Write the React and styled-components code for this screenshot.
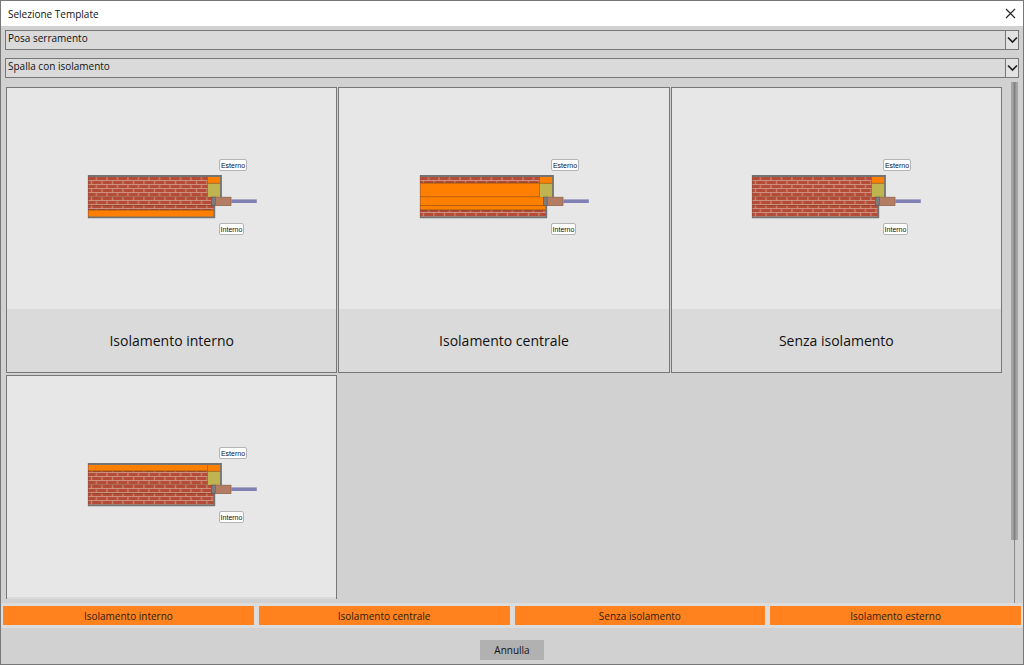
import { useState } from 'react';
import styled, { createGlobalStyle } from 'styled-components';

const GlobalStyle = createGlobalStyle`
  * {
    box-sizing: border-box;
  }

  body {
    margin: 0;
    font-family: 'Open Sans', 'Noto Sans', sans-serif;
    font-size: 10px;
    line-height: 14px;
    color: #111111;
  }

  button,
  select {
    font: inherit;
    color: inherit;
  }
`;

const Window = styled.main`
  height: 100vh;
  display: flex;
  flex-direction: column;
  border: 1px solid #777777;
  background-color: #d1d1d1;
`;

const TitleBar = styled.header`
  display: flex;
  align-items: center;
  justify-content: space-between;
  flex-shrink: 0;
  height: 25px;
  padding: 0 7px;
  background-color: #ffffff;
`;

const Title = styled.h1`
  margin: 0;
  font-size: 10px;
  font-weight: 400;
`;

const CloseButton = styled.button`
  display: flex;
  padding: 0;
  border: none;
  background: none;
`;

const Filters = styled.div`
  display: flex;
  flex-direction: column;
  flex-shrink: 0;
  gap: 8px;
  padding: 4px 4px 9px;
`;

const Combo = styled.label`
  display: grid;
  grid-template-columns: 1fr 14px;
  grid-template-rows: 20px;
`;

const ComboSelect = styled.select`
  grid-area: 1 / 1 / 2 / 3;
  appearance: none;
  padding: 0 20px 4px 2px;
  border: 1px solid #777777;
  border-radius: 0;
  background-color: #dadada;
`;

const ComboArrow = styled.span`
  grid-area: 1 / 2 / 2 / 3;
  display: flex;
  align-items: center;
  justify-content: center;
  border: 1px solid #777777;
  background-color: #e2e2e2;
  pointer-events: none;
`;

const Body = styled.div`
  display: flex;
  flex: 1;
  min-height: 0;
  padding: 0 5px;
`;

const Cards = styled.div`
  flex: 1;
  display: grid;
  grid-template-columns: repeat(3, 1fr);
  align-content: start;
  gap: 2px 1px;
  margin-bottom: 4px;
  overflow-y: auto;
  scrollbar-width: none;
`;

const Card = styled.button`
  display: flex;
  flex-direction: column;
  padding: 0;
  border: 1px solid #777777;
  background-color: #e7e7e7;
`;

const Preview = styled.span`
  display: flex;
  align-items: center;
  justify-content: center;
  width: 100%;
  height: 221px;
`;

const Caption = styled.span`
  width: 100%;
  padding: 20px 0;
  background-color: #dadada;
  font-size: 14px;
  line-height: 23px;
  text-align: center;
`;

const ScrollRail = styled.div`
  flex-shrink: 0;
  width: 7px;
  margin-left: 9px;
  margin-top: -5px;
  background: linear-gradient(#8a8a8a, #8a8a8a) center / 1px 100% no-repeat;
`;

const ScrollThumb = styled.div`
  height: 88%;
  background: linear-gradient(90deg, #a4a4a4 2px, #808080 3px 4px, #a4a4a4 5px);
`;

const Shortcuts = styled.nav`
  display: grid;
  grid-template-columns: repeat(4, 1fr);
  flex-shrink: 0;
  gap: 5px;
  padding: 3px 2px;
  background-color: #dcdcdc;
`;

const Shortcut = styled.button`
  height: 19px;
  padding: 0;
  border: none;
  background-color: #ff821e;
  color: #2e2010;
`;

const Footer = styled.footer`
  display: flex;
  justify-content: center;
  flex-shrink: 0;
  padding: 12px 0 4px;
`;

const CancelButton = styled.button`
  width: 64px;
  height: 20px;
  padding: 0;
  border: none;
  background-color: #b1b1b1;
`;

const BRICK = 'url(#bricks)';
const ORANGE = '#ff8000';

// layers of the wall, from outside to inside: [y, height, fill]
const templates = [
  { name: 'Isolamento interno', layers: [[18, 34, BRICK], [52, 7, ORANGE]] },
  { name: 'Isolamento centrale', layers: [[18, 7, BRICK], [25, 27, ORANGE], [52, 7, BRICK]] },
  { name: 'Senza isolamento', layers: [[18, 41, BRICK]] },
  { name: 'Isolamento esterno', layers: [[18, 7, ORANGE], [25, 34, BRICK]] },
];

const Tag = ({ x, y, width, children }) => (
  <>
    <rect x={x + 0.5} y={y + 0.5} width={width} height="11" rx="1.5" fill="#fff" stroke="#b4b4b4" />
    <text
      x={x + 0.5 + width / 2}
      y={y + 8.5}
      textAnchor="middle"
      fontFamily="'Liberation Sans', sans-serif"
      fontSize="7"
      fill="#111"
    >
      {children}
    </text>
  </>
);

const WallSection = ({ layers }) => (
  <svg width="170" height="82" viewBox="0 0 170 82" aria-hidden="true">
    <defs>
      <pattern id="bricks" x="0" y="19" width="10.5" height="8" patternUnits="userSpaceOnUse">
        <rect width="10.5" height="8" fill="#b54c38" />
        <path d="M0 3.5H10.5M0 7.5H10.5" stroke="#d39e8e" strokeWidth="0.8" />
        <path d="M9.5 0V3.5M4.5 4V7.5" stroke="#d39e8e" strokeWidth="0.9" />
      </pattern>
      <clipPath id="wall">
        <path d="M1 17H134V39H127V60H1Z" />
      </clipPath>
    </defs>
    <g clipPath="url(#wall)">
      {layers.map(([y, height, fill]) => (
        <g key={y}>
          <rect x="1" y={y} width="134" height={height} fill={fill} />
          <path d={`M1 ${y}H134`} stroke="#5a3a20" strokeWidth="0.6" />
        </g>
      ))}
      <path d="M1 38.7H126M1 47.5H126" stroke="#7a3c18" strokeWidth="0.5" />
    </g>
    <rect x="120.5" y="18" width="13.5" height="7.5" fill={ORANGE} />
    <rect x="120.5" y="25.5" width="13.5" height="13.5" fill="#c0b450" />
    <path d="M120.5 18V39M120.5 25.3H134" fill="none" stroke="#806020" strokeWidth="0.6" />
    <path d="M1 18H134V39M127.3 47V59.3H1" fill="none" stroke="#737373" strokeWidth="1.8" />
    <path d="M1.3 17V60" stroke="#8a5040" strokeWidth="0.6" />
    <rect x="124.3" y="39" width="4" height="8.7" fill="#7c7c7c" stroke="#555" strokeWidth="0.6" />
    <rect x="128.3" y="39.2" width="15.7" height="8.4" fill="#b47c62" stroke="#8c5c48" strokeWidth="0.7" />
    <rect x="144.3" y="41.4" width="25.5" height="3.6" fill="#8080b4" />
    <Tag x={132} y={1} width={27}>Esterno</Tag>
    <Tag x={132} y={65} width={24}>Interno</Tag>
  </svg>
);

const Select = ({ label, children }) => (
  <Combo>
    <ComboSelect aria-label={label}>
      <option>{children}</option>
    </ComboSelect>
    <ComboArrow>
      <svg width="11" height="8" viewBox="0 0 11 8" fill="none" stroke="#222" strokeWidth="1.7">
        <path d="M1 1.5L5.5 6L10 1.5" />
      </svg>
    </ComboArrow>
  </Combo>
);

export default function App() {
  const [open, setOpen] = useState(true);
  const close = () => setOpen(false);

  return (
    <>
      <GlobalStyle />
      {open && (
        <Window>
          <TitleBar>
            <Title>Selezione Template</Title>
            <CloseButton type="button" aria-label="Chiudi" onClick={close}>
              <svg width="11" height="11" viewBox="0 0 11 11" stroke="#222" strokeWidth="1.1">
                <path d="M1 1L10 10M10 1L1 10" />
              </svg>
            </CloseButton>
          </TitleBar>
          <Filters>
            <Select label="Categoria">Posa serramento</Select>
            <Select label="Tipo di spalla">Spalla con isolamento</Select>
          </Filters>
          <Body>
            <Cards>
              {templates.map(({ name, layers }) => (
                <Card key={name} type="button">
                  <Preview>
                    <WallSection layers={layers} />
                  </Preview>
                  <Caption>{name}</Caption>
                </Card>
              ))}
            </Cards>
            <ScrollRail>
              <ScrollThumb />
            </ScrollRail>
          </Body>
          <Shortcuts>
            {templates.map(({ name }) => (
              <Shortcut key={name} type="button">
                {name}
              </Shortcut>
            ))}
          </Shortcuts>
          <Footer>
            <CancelButton type="button" onClick={close}>
              Annulla
            </CancelButton>
          </Footer>
        </Window>
      )}
    </>
  );
}
